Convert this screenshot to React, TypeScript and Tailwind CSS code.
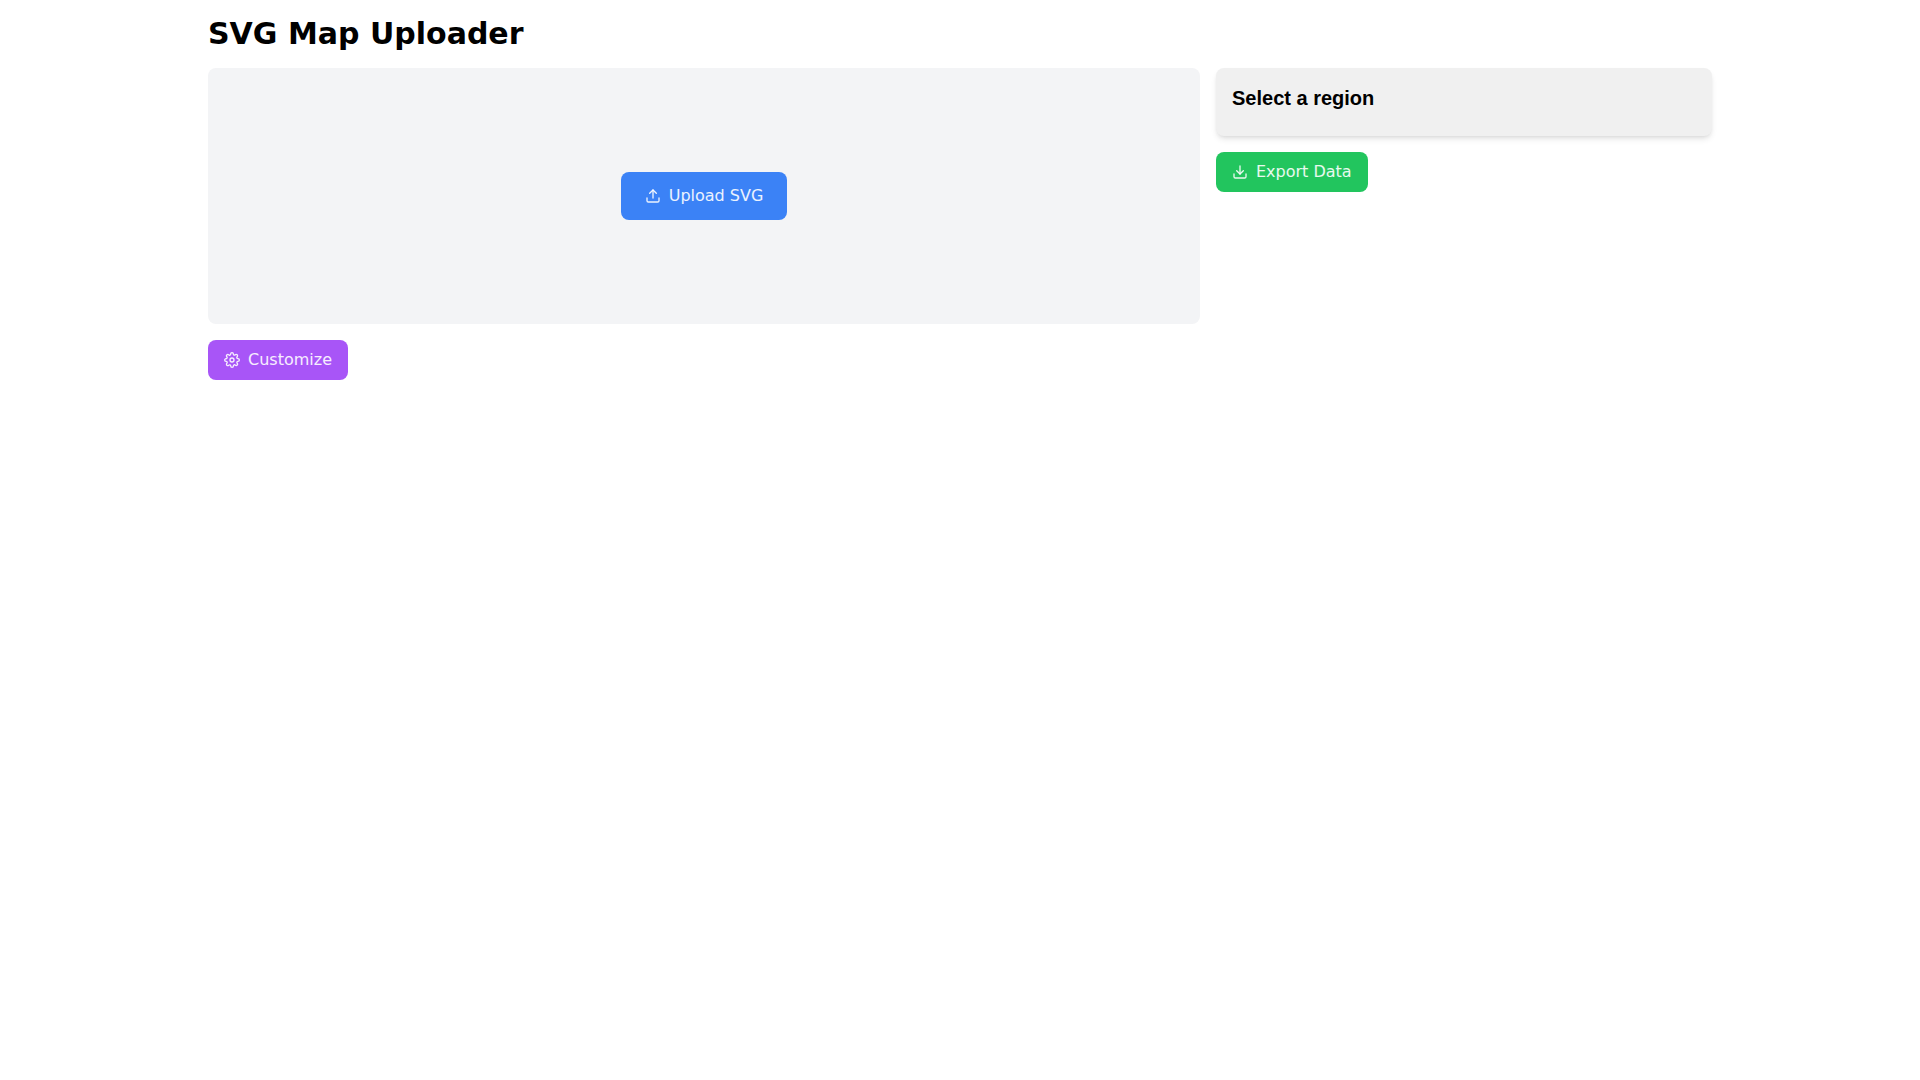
import React from 'react';
import { FiDownload, FiSettings, FiUpload } from 'react-icons/fi';

const font = "font-['DejaVu_Sans',sans-serif]";

const App: React.FC = () => {
  return (
    <div className={`w-[1536px] mx-auto p-4 bg-white text-black ${font}`}>
      <h1 className="text-3xl font-bold mb-4">SVG Map Uploader</h1>
      <div className="grid grid-cols-[2fr_1fr] gap-4">
        {/* Map area */}
        <div>
          <div className="h-64 bg-[#f3f4f6] rounded-lg flex items-center justify-center">
            <button className="flex items-center px-6 py-3 bg-[#3b82f6] text-white/90 rounded-lg">
              <FiUpload className="w-4 h-4 mr-2" />
              Upload SVG
            </button>
          </div>
          <div className="mt-4">
            <button className="flex items-center px-4 py-2 bg-[#a855f7] text-white/90 rounded-lg">
              <FiSettings className="w-4 h-4 mr-2" />
              Customize
            </button>
          </div>
        </div>

        {/* Sidebar */}
        <div>
          <div className="p-4 bg-[#f0f0f0] rounded-lg shadow-md">
            <h2 className="text-xl font-bold mb-2 font-['Liberation_Sans',sans-serif]">Select a region</h2>
          </div>
          <div className="mt-4">
            <button className="flex items-center px-4 py-2 bg-[#22c55e] text-white/90 rounded-lg">
              <FiDownload className="w-4 h-4 mr-2" />
              Export Data
            </button>
          </div>
        </div>
      </div>
    </div>
  );
};

export default App;
